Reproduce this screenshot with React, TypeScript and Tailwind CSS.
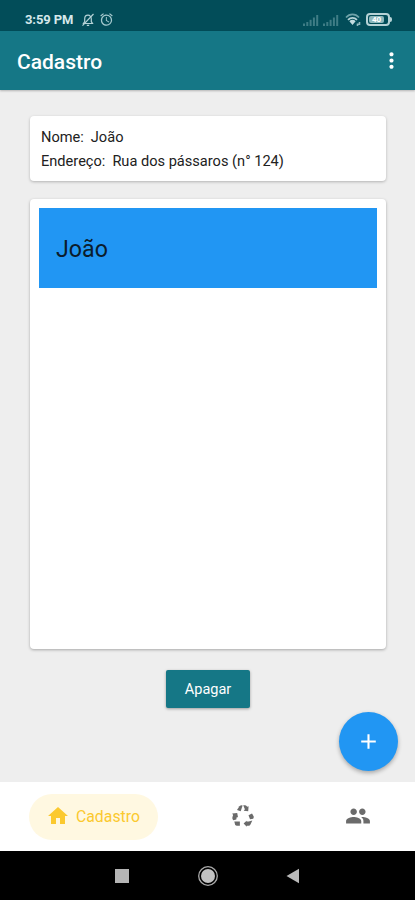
import React from "react";
import { MdHome, MdPeople, MdAlarm, MdMoreVert, MdAdd } from "react-icons/md";

function BellOffIcon() {
  return (
    <svg width="14" height="14" viewBox="0 0 14 14" fill="none" stroke="#b5d2d6" strokeWidth="1.2">
      <path d="M2.5 10.5h9l-1.2-1.8V6c0-2.2-1.3-3.8-3.3-3.8S3.7 3.8 3.7 6v2.7z" />
      <path d="M5.8 12.3h2.4M1.5 12.7 12.5 1" />
    </svg>
  );
}

function SignalIcon() {
  return (
    <svg width="16" height="12" viewBox="0 0 16 12" fill="#3f7d86">
      <rect x="0" y="9.5" width="2" height="2.5" />
      <rect x="3.3" y="8" width="2" height="4" />
      <rect x="6.6" y="5.8" width="2" height="6.2" />
      <rect x="9.9" y="3.5" width="2" height="8.5" />
      <rect x="13.2" y="1" width="2" height="11" />
    </svg>
  );
}

function WifiIcon() {
  return (
    <svg width="17" height="14" viewBox="0 0 17 14" fill="none" strokeWidth="1.7">
      <path d="M1 4.5c3.7-4.1 9.3-4.1 13 0" stroke="#6fa3a9" />
      <path d="M3 6.9c2.6-2.8 6.4-2.8 9 0" stroke="#b5d2d6" />
      <path d="M4.4 8.2c1.9-1.9 4.3-1.9 6.2 0L7.5 12z" fill="#c3dcdf" />
      <path d="M14.5 9v2.2h-2v1.8" stroke="#8fb9be" strokeWidth="1.6" />
    </svg>
  );
}

// Three bent arrows, each one split at the fold
function RecycleIcon({ className }: { className?: string }) {
  return (
    <svg className={className} width="22" height="22" viewBox="0 0 22 22" fill="currentColor">
      <path d="M6.3 3 7.4 1.3Q8.3.2 9.9.2L10.6.4 8.700 6.200 5 5.100z" />
      <path d="M11.200.300h2q1.300.300 2 1.500l1.400-.500-.4 5-4.500-.600 1.200-1.400z" />
      <path d="M.200 8.600 5.200 8 6 12.300 4.700 12.200 4.300 14.500 1.200 15.300Q0 13.900.400 12.300L1.100 9.900z" />
      <path d="M2.300 16.500H7.900v4.300H4.900q-1.100 0-1.800-1z" />
      <path d="M16.500 10.200 20 8.500 21.600 11.200Q22.100 12.500 21.200 13.700L18 14.200z" />
      <path d="M20.300 15.500 18.600 19.300q-.7 1.500-2.100 1.500H14.800v1L11.600 18.600l3-2.900v.9h2.200z" />
    </svg>
  );
}

function Battery({ level }: { level: number }) {
  return (
    <div className="flex items-center">
      <div className="flex h-[13px] w-6 items-center rounded-[4px] border-2 border-[#b5d2d6] p-px">
        <div className="flex h-full w-[15px] items-center justify-center rounded-[2px] bg-[#8db8bd] text-[8px] leading-none font-bold text-white">
          {level}
        </div>
      </div>
      <div className="h-[5px] w-[2px] rounded-r-sm bg-[#b5d2d6]" />
    </div>
  );
}

function StatusBar() {
  return (
    <div className="flex h-[31px] items-center bg-[#024d59] pt-2 pr-[23px] pl-[25px]">
      <span className="w-[56px] pt-px text-[13px] font-bold tracking-[-0.1px] whitespace-nowrap text-[#d5e8eb]">3:59 PM</span>
      <BellOffIcon />
      <MdAlarm className="ml-[4px] h-[15px] w-[15px] text-[#a5c9ce]" />
      <div className="ml-auto flex items-center">
        <SignalIcon />
        <span className="w-[4px]" />
        <SignalIcon />
        <span className="w-[6px]" />
        <WifiIcon />
        <span className="w-[4px]" />
        <Battery level={40} />
      </div>
    </div>
  );
}

export default function App() {
  const person = { name: "João", address: "Rua dos pássaros (n° 124)" };

  return (
    <div className="flex h-[900px] w-[415px] flex-col overflow-hidden bg-[#eeeeee] font-['Roboto',sans-serif] text-[#212121]">
      <StatusBar />

      {/* App bar */}
      <header className="flex h-[59px] shrink-0 items-center justify-between bg-[#157786] pt-[3px] pr-[11px] pl-[17px] shadow-[0_1px_2px_rgba(0,0,0,0.25)]">
        <h1 className="pt-px text-[21px] font-medium text-white">Cadastro</h1>
        <MdMoreVert className="-mt-[3px] h-[25px] w-[25px] text-white" />
      </header>

      <main className="flex flex-1 flex-col pt-[26px] pr-[29px] pl-[30px]">
        {/* Selected person */}
        <section className="h-[65px] rounded-[4px] bg-white px-[11px] pt-[9px] text-[14.6px] leading-6 shadow-[0_1px_3px_rgba(0,0,0,0.25)]">
          <p className="flex gap-[7px]">
            <span>Nome:</span>
            <span>{person.name}</span>
          </p>
          <p className="flex gap-[7px]">
            <span>Endereço:</span>
            <span>{person.address}</span>
          </p>
        </section>

        {/* People list */}
        <section className="mt-[18px] h-[450px] rounded-[4px] bg-white p-[9px] shadow-[0_1px_3px_rgba(0,0,0,0.3)]">
          <div className="flex h-[80px] items-center bg-[#2196f3] pt-[2px] pl-[17px] text-[23.2px] text-[#0b1c2c]">
            {person.name}
          </div>
        </section>

        <button className="mt-[21px] h-[38px] w-[84px] self-center rounded-[2px] bg-[#157786] pt-[2px] text-[14.5px] text-white shadow-[0_1px_3px_rgba(0,0,0,0.35)]">
          Apagar
        </button>
        <button className="mt-[4px] -mr-[12px] flex h-[59px] w-[59px] items-center justify-center self-end rounded-full bg-[#2196f3] text-white shadow-[0_2px_4px_rgba(0,0,0,0.3)]">
          <MdAdd className="h-[25px] w-[25px]" />
        </button>
      </main>

      {/* Bottom tabs */}
      <nav className="flex h-[69px] shrink-0 items-center bg-white pl-[29px]">
        <button className="flex h-[46px] w-[129px] items-center gap-[6px] rounded-full bg-[#fff8e1] pl-[17px] text-[#fbc92f]">
          <MdHome className="-mt-px h-6 w-6" />
          <span className="text-[15.8px]">Cadastro</span>
        </button>
        <RecycleIcon className="-mt-[2px] ml-[74px] text-[#6b6b6b]" />
        <MdPeople className="-mt-[2px] ml-[91px] h-[26px] w-[26px] text-[#6b6b6b]" />
      </nav>

      {/* System navigation */}
      <div className="flex h-[49px] shrink-0 items-center bg-black">
        <div className="ml-[115px] h-[14px] w-[14px] bg-[#b5b5b5]" />
        <svg className="ml-[68px]" width="22" height="22" viewBox="0 0 22 22">
          <circle cx="11" cy="11" r="9.3" fill="none" stroke="#aaaaaa" strokeWidth="1.3" />
          <circle cx="11" cy="11" r="7" fill="#c2c2c2" />
        </svg>
        <svg className="ml-[67px]" width="14" height="16" viewBox="0 0 14 16">
          <path d="M0.5 8 13 0.8v14.4z" fill="#b9b9b9" />
        </svg>
      </div>
    </div>
  );
}
